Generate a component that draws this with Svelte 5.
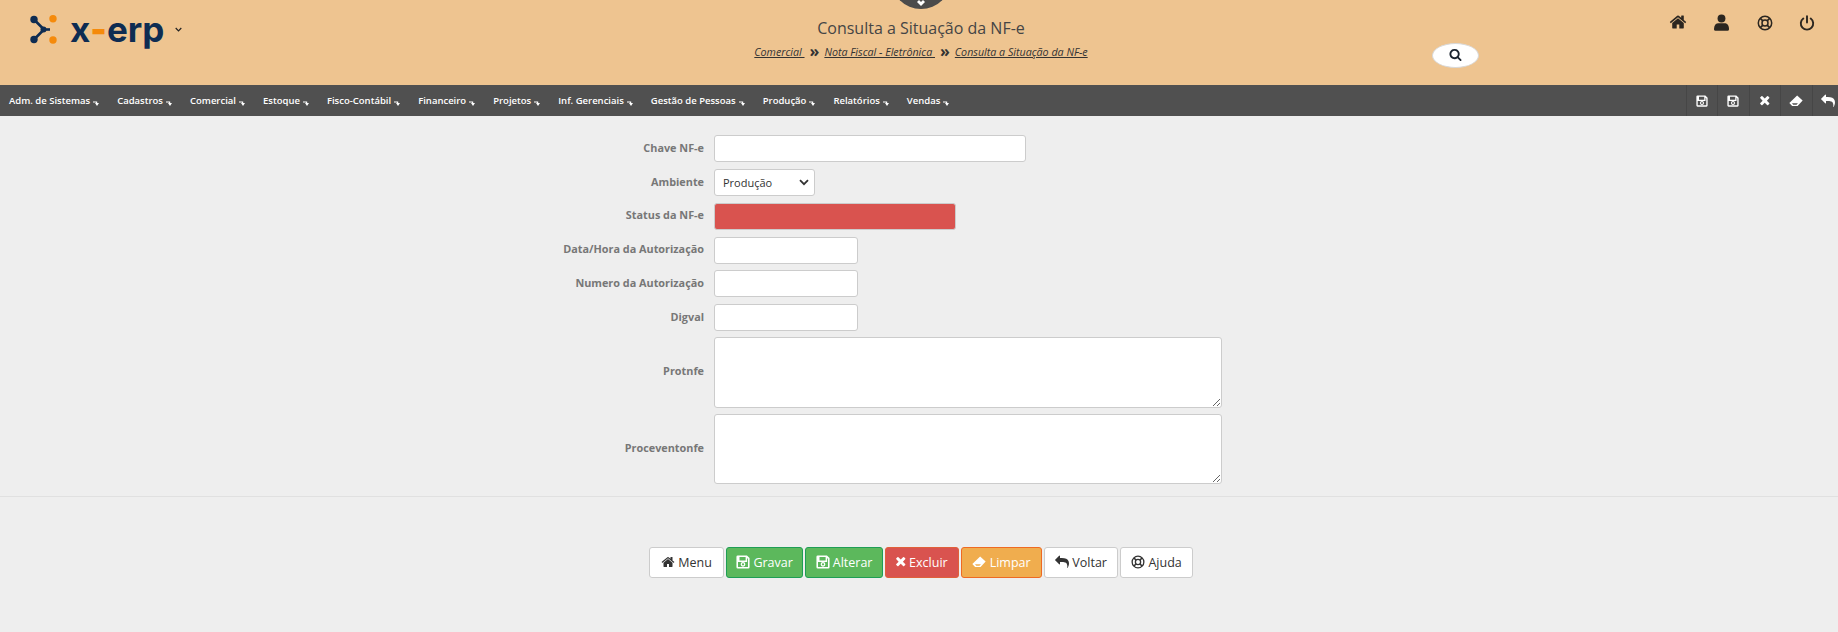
<script>
  const menus = [
    "Adm. de Sistemas", "Cadastros", "Comercial", "Estoque", "Fisco-Contábil", "Financeiro",
    "Projetos", "Inf. Gerenciais", "Gestão de Pessoas", "Produção", "Relatórios", "Vendas",
  ];

  const paths = {
    home: "M1472 992v480q0 26-19 45t-45 19h-384v-384h-256v384h-384q-26 0-45-19t-19-45v-480q0-1 .5-3t.5-3l575-474 575 474q1 2 1 6zm223-69l-62 74q-8 9-21 11h-3q-13 0-21-7l-692-577-692 577q-12 8-24 7-13-2-21-11l-62-74q-8-10-7-23.5t11-21.5l719-599q32-26 76-26t76 26l244 204v-195q0-14 9-23t23-9h192q14 0 23 9t9 23v408l219 182q10 8 11 21.5t-7 23.5z",
    times: "M1298 1214q0 40-28 68l-136 136q-28 28-68 28t-68-28l-294-294-294 294q-28 28-68 28t-68-28l-136-136q-28-28-28-68t28-68l294-294-294-294q-28-28-28-68t28-68l136-136q28-28 68-28t68 28l294 294 294-294q28-28 68-28t68 28l136 136q28 28 28 68t-28 68l-294 294 294 294q28 28 28 68z",
    reply: "M1792 1120q0 166-127 451-3 7-10.500 24t-13.500 30-13 22q-12 17-28 17-15 0-23.500-10t-8.500-25q0-9 2.500-26.500t2.500-23.500q5-68 5-123 0-101-17.500-181t-48.500-138.500-80-101-105.500-69.500-133-42.500-154-21.500-175.500-6h-224v256q0 26-19 45t-45 19-45-19l-512-512q-19-19-19-45t19-45l512-512q19-19 45-19t45 19 19 45v256h224q713 0 875 403 53 134 53 333z",
    search: "M1216 832q0-185-131.500-316.500t-316.500-131.500-316.500 131.500-131.500 316.500 131.500 316.500 316.500 131.500 316.500-131.500 131.500-316.500zm512 832q0 52-38 90t-90 38q-54 0-90-38l-343-342q-179 124-399 124-143 0-273.500-55.500t-225-150-150-225-55.500-273.500 55.500-273.500 150-225 225-150 273.500-55.500 273.500 55.500 225 150 150 225 55.500 273.500q0 220-124 399l343 343q37 37 37 90z",
  };

  const toolbar = [
    { name: "save", size: 12 },
    { name: "save", size: 12 },
    { name: "times", size: 14 },
    { name: "eraser", size: 14 },
    { name: "reply", size: 14 },
  ];

  const buttons = [
    { label: "Menu", icon: "home", cls: "plain", width: 75 },
    { label: "Gravar", icon: "save", cls: "green", width: 77 },
    { label: "Alterar", icon: "save", cls: "green", width: 78 },
    { label: "Excluir", icon: "times", cls: "red", width: 74 },
    { label: "Limpar", icon: "eraser", cls: "orange", width: 81 },
    { label: "Voltar", icon: "reply", cls: "plain", width: 74 },
    { label: "Ajuda", icon: "ring", cls: "plain", width: 73 },
  ];
</script>

{#snippet icon(name, size)}
  {#if name === "save"}
    <svg class="ico" width={size} height={size} viewBox="0 0 16 16">
      <path fill-rule="evenodd" fill="currentColor" d="M2 .5h10.500l3 3V14a1.500 1.500 0 0 1-1.500 1.500H2A1.500 1.500 0 0 1 .5 14V2A1.500 1.500 0 0 1 2 .5zm2 1.800v3.900h7V2.300zM2.300 13.700h11.400V4.500l-1-1v4.400H2.300z" />
      <circle cx="8" cy="10.600" r="2" fill="none" stroke="currentColor" stroke-width="1.400" />
    </svg>
  {:else if name === "ring"}
    <svg class="ico" width={size} height={size} viewBox="0 0 16 16" fill="none" stroke="currentColor">
      <circle cx="8" cy="8" r="6.700" stroke-width="1.500" />
      <circle cx="8" cy="8" r="3" stroke-width="1.500" />
      <path stroke-width="1.700" d="M3.300 3.300l2.600 2.600M12.700 3.300l-2.600 2.600M3.300 12.700l2.600-2.600M12.700 12.700l-2.600-2.600" />
    </svg>
  {:else if name === "user"}
    <svg class="ico" width={size} height={size} viewBox="0 0 16 16" fill="currentColor">
      <circle cx="8" cy="4.200" r="3.700" />
      <path d="M1 13.500C1 10.500 3 8.700 5 8.700h6c2 0 4 1.800 4 4.800V14.500a1.300 1.300 0 0 1-1.300 1.300H2.300A1.300 1.300 0 0 1 1 14.500z" />
    </svg>
  {:else if name === "power"}
    <svg class="ico" width={size} height={size} viewBox="0 0 16 16" fill="none" stroke="currentColor" stroke-width="1.900" stroke-linecap="round">
      <path d="M8 1.200v6.300M4.300 3.500a6.200 6.200 0 1 0 7.400 0" />
    </svg>
  {:else if name === "eraser"}
    <svg class="ico" width={size} height={size} viewBox="0 0 16 14" fill="currentColor">
      <path d="M9.300.6L15.600 6.400 9.800 12.800H3.600L.4 9.200zM3.400 9.500l1.400 1.800h3.800l1.600-1.800z" fill-rule="evenodd" />
    </svg>
  {:else if name === "times"}
    <svg class="ico" width={size * 0.68} height={size} viewBox="96 0 1216 1792" fill="currentColor">
      <path d={paths.times} />
    </svg>
  {:else}
    <svg class="ico" width={size} height={size} viewBox="0 0 1792 1792" fill="currentColor">
      <path d={paths[name]} />
    </svg>
  {/if}
{/snippet}

<header class="top">
  <div class="brand">
    <svg class="mark" width="29" height="29" viewBox="0 0 29 29">
      <path d="M5 4.500L15 14.500L5 24.500" fill="none" stroke="#0e2c52" stroke-width="2.600" />
      <path d="M15 14.500h6" fill="none" stroke="#0e2c52" stroke-width="2.600" />
      <circle cx="5" cy="4.500" r="3.700" fill="#0e2c52" />
      <circle cx="5" cy="24.500" r="3.700" fill="#0e2c52" />
      <circle cx="14.500" cy="14.500" r="3" fill="#0e2c52" />
      <circle cx="24" cy="3.800" r="3.700" fill="#f58a0b" />
      <circle cx="24" cy="25" r="3.700" fill="#f58a0b" />
    </svg>
    <span class="logo">x<span class="dash">-</span>erp</span>
    <svg class="caret" width="7" height="5" viewBox="0 0 7 5">
      <path d="M.7 1l2.800 2.800L6.300 1" fill="none" stroke="#222" stroke-width="1.200" />
    </svg>
  </div>

  <div class="heading">
    <h1>Consulta a Situação da NF-e</h1>
    <nav class="crumbs">
      <a href="#c">Comercial&nbsp;</a>
      <span class="sep">»</span>
      <a href="#n">Nota Fiscal - Eletrônica&nbsp;</a>
      <span class="sep">»</span>
      <a href="#s">Consulta a Situação da NF-e</a>
    </nav>
  </div>

  <div class="tools">
    <div class="quick">
      <span>{@render icon("home", 18)}</span>
      <span>{@render icon("user", 17)}</span>
      <span>{@render icon("ring", 16)}</span>
      <span>{@render icon("power", 16)}</span>
    </div>
    <button class="search" aria-label="Pesquisar">{@render icon("search", 13)}</button>
  </div>

  <!-- aba recolhida no topo -->
  <div class="pull">
    <svg width="8" height="6" viewBox="0 0 8 6"><path d="M4 6L0 2 2 0l2 2 2-2 2 2z" fill="#fff" /></svg>
  </div>
</header>

<div class="menubar">
  <ul class="menus">
    {#each menus as m}
      <li>
        {m}<svg class="arrow" width="6" height="5" viewBox="0 0 6 5">
          <path d="M0 .5h4.200V2H6L4 5 2 2h1V1.500H0z" fill="#fff" />
        </svg>
      </li>
    {/each}
  </ul>
  <div class="actions">
    {#each toolbar as t}
      <span class="action">{@render icon(t.name, t.size)}</span>
    {/each}
  </div>
</div>

<main>
  <form class="fields">
    <label for="chave">Chave NF-e</label>
    <input id="chave" class="wide" type="text" />

    <label for="amb">Ambiente</label>
    <select id="amb" class="env">
      <option>Produção</option>
      <option>Homologação</option>
    </select>

    <label for="status">Status da NF-e</label>
    <input id="status" class="status" type="text" />

    <label for="data">Data/Hora da Autorização</label>
    <input id="data" class="short" type="text" />

    <label for="num">Numero da Autorização</label>
    <input id="num" class="short" type="text" />

    <label for="dig">Digval</label>
    <input id="dig" class="short" type="text" />

    <label for="prot">Protnfe</label>
    <textarea id="prot" class="first"></textarea>

    <label for="proc">Proceventonfe</label>
    <textarea id="proc"></textarea>
  </form>

  <hr />

  <div class="buttons">
    {#each buttons as b}
      <button type="button" class="btn {b.cls}" style="width: {b.width}px">
        {@render icon(b.icon, 14)}
        {b.label}
      </button>
    {/each}
  </div>
</main>

<style>
  :global(body) {
    margin: 0;
    background: #eeeeee;
    font-family: "Open Sans", sans-serif;
    color: #333;
  }

  .ico {
    display: inline-block;
    vertical-align: -2px;
  }

  .top {
    position: relative;
    height: 85px;
    background: #eec490;
    display: grid;
    grid-template-columns: 1fr auto 1fr;
    overflow: hidden;
  }

  .brand {
    display: flex;
    align-items: center;
    align-self: start;
    padding: 14px 0 0 29px;
  }

  .logo {
    margin-left: 12px;
    font-family: Inter, sans-serif;
    font-weight: 700;
    font-size: 35px;
    line-height: 30px;
    color: #0e2c52;
  }

  .dash {
    color: #f58a0b;
    font-weight: 900;
  }

  .caret {
    margin-left: 11px;
  }

  .heading {
    text-align: center;
    padding: 17px 0 0 4px;
  }

  h1 {
    margin: 0;
    font-size: 16px;
    font-weight: 400;
    line-height: 22px;
    color: #454545;
  }

  .crumbs {
    display: flex;
    justify-content: center;
    gap: 5px;
    margin-top: 6px;
    font-size: 10.700px;
    line-height: 15px;
    font-style: italic;
  }

  .crumbs a {
    color: #333;
    text-decoration: underline;
  }

  .sep {
    font-style: normal;
    font-weight: 700;
    font-size: 16px;
    line-height: 12px;
    color: #333;
  }

  .tools {
    display: flex;
    flex-direction: column;
  }

  .quick {
    display: flex;
    justify-content: flex-end;
    gap: 26.500px;
    padding: 12px 23px 0 0;
    color: #2b2620;
  }

  .quick span {
    display: block;
    height: 18px;
  }

  .search {
    align-self: flex-start;
    margin: 13px 0 0 344px;
    width: 47px;
    height: 25px;
    border: 1px solid #d8d8d8;
    border-radius: 50%;
    background: #fff;
    color: #1c2530;
    padding: 0 0 3px;
  }

  .pull {
    position: absolute;
    left: 891px;
    top: -51px;
    width: 60px;
    height: 60px;
    border-radius: 50%;
    background: #4b4b4b;
    display: flex;
    justify-content: center;
    align-items: flex-end;
    padding-bottom: 3px;
    box-sizing: border-box;
  }

  .menubar {
    height: 31px;
    background: #505050;
    display: flex;
    justify-content: space-between;
    overflow: hidden;
  }

  .menus {
    display: flex;
    margin: 0;
    padding: 0;
    list-style: none;
  }

  .menus li {
    padding: 0 9px;
    font-size: 9.500px;
    font-weight: 600;
    line-height: 31px;
    color: #fff;
    white-space: nowrap;
  }

  .arrow {
    margin-left: 3px;
    vertical-align: -2px;
  }

  .actions {
    display: flex;
    margin-right: -5px;
  }

  .action {
    box-sizing: border-box;
    width: 31.500px;
    border-left: 1px solid #464646;
    display: flex;
    align-items: center;
    justify-content: center;
    color: #fff;
  }

  main {
    padding-top: 19.250px;
  }

  .fields {
    display: grid;
    grid-template-columns: 704px 1fr;
    column-gap: 10px;
    row-gap: 6.750px;
    align-items: center;
  }

  label {
    text-align: right;
    font-size: 10.850px;
    font-weight: 700;
    color: #777;
    margin-top: -3px;
  }

  input,
  select,
  textarea {
    display: block;
    box-sizing: border-box;
    margin: 0;
    height: 27px;
    border: 1px solid #ccc;
    border-radius: 3px;
    background: #fff;
  }

  .wide {
    width: 312px;
  }

  .env {
    width: 101px;
    padding: 0 0 0 8px;
    appearance: none;
    background: #fff url("data:image/svg+xml,%3Csvg xmlns='http://www.w3.org/2000/svg' width='10' height='7' viewBox='0 0 10 7'%3E%3Cpath d='M1 1.200l4 4 4-4' fill='none' stroke='%23333' stroke-width='1.800'/%3E%3C/svg%3E") no-repeat right 5px center;
    font-family: "Open Sans", sans-serif;
    font-size: 11px;
    color: #333;
  }

  .status {
    width: 242px;
    background: #d9534f;
  }

  .short {
    width: 144px;
  }

  textarea {
    width: 508px;
    height: 70px;
  }

  .first {
    height: 71px;
    margin: -0.750px 0 -1px;
  }

  hr {
    margin: 12px 0 0;
    border: 0;
    border-top: 1px solid #e0e0e0;
  }

  .buttons {
    display: flex;
    justify-content: center;
    gap: 2px;
    margin-top: 50px;
    padding-left: 4px;
  }

  .btn {
    box-sizing: border-box;
    height: 31px;
    padding: 0;
    border: 1px solid #ccc;
    border-radius: 3px;
    font-family: "Open Sans", sans-serif;
    font-size: 12.500px;
    white-space: nowrap;
  }

  .plain {
    background: #fff;
    color: #333;
  }

  .green {
    background: #5cb85c;
    border-color: #1f9d55;
    color: #fff;
  }

  .red {
    background: #d9534f;
    border-color: #e0603a;
    color: #fff;
  }

  .orange {
    background: #f0ad4e;
    border-color: #ee6a23;
    color: #fff;
  }
</style>
